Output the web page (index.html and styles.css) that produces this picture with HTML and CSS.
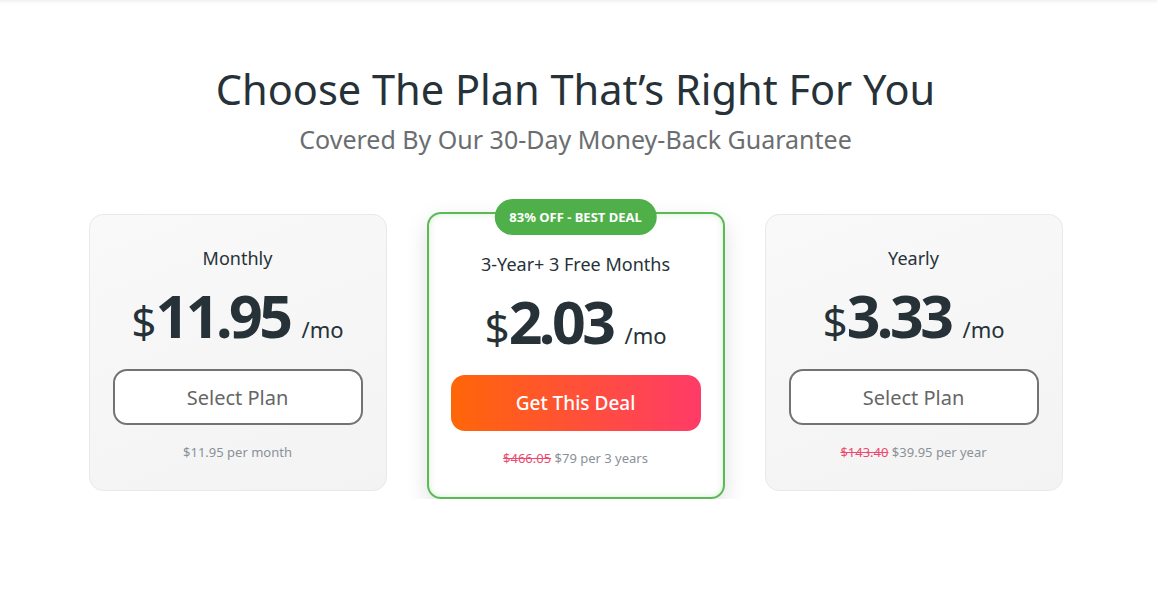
FILE: index.html
```html
<!DOCTYPE html>
<html>
<head>
<meta charset="utf-8">
<link rel="stylesheet" href="styles.css">
</head>
<body>
<div class="topbar"></div>
<section class="pricing">
  <h1 class="title">Choose The Plan That’s Right For You</h1>
  <p class="subtitle">Covered By Our 30-Day Money-Back Guarantee</p>
  <div class="plans">
    <div class="card">
      <div class="plan-name">Monthly</div>
      <div class="price"><span class="cur">$</span><span class="amount">11.95</span><span class="per">/mo</span></div>
      <button class="btn btn-outline">Select Plan</button>
      <div class="note">$11.95 per month</div>
    </div>
    <div class="card card-featured">
      <div class="badge">83% OFF - BEST DEAL</div>
      <div class="plan-name">3-Year+ 3 Free Months</div>
      <div class="price"><span class="cur">$</span><span class="amount">2.03</span><span class="per">/mo</span></div>
      <button class="btn btn-deal">Get This Deal</button>
      <div class="note"><s class="old">$466.05</s> $79 per 3 years</div>
    </div>
    <div class="card">
      <div class="plan-name">Yearly</div>
      <div class="price"><span class="cur">$</span><span class="amount">3.33</span><span class="per">/mo</span></div>
      <button class="btn btn-outline">Select Plan</button>
      <div class="note"><s class="old">$143.40</s> $39.95 per year</div>
    </div>
  </div>
</section>
</body>
</html>
```

FILE: styles.css
```css
* { box-sizing: border-box; }
body {
  margin: 0;
  background: #fff;
  font-family: "Noto Sans", "Open Sans", sans-serif;
  color: #263238;
}
.topbar {
  height: 4px;
  background: linear-gradient(#f1f1f1, #fff);
}
.pricing {
  display: flex;
  flex-direction: column;
  align-items: center;
  padding-right: 6px;
}
.title {
  margin: 57px 0 0;
  font-size: 41.5px;
  font-weight: 400;
  line-height: 56px;
  color: #263238;
}
.subtitle {
  margin: 5px 0 0;
  font-size: 25px;
  line-height: 34px;
  color: #6b6e70;
}
.plans {
  display: flex;
  gap: 40px;
  margin-top: 58px;
  align-items: flex-start;
}
.card {
  position: relative;
  width: 298px;
  height: 277px;
  border: 1px solid #e9e9e9;
  border-radius: 14px;
  background: linear-gradient(160deg, #f9f9f9, #f3f3f3);
  display: flex;
  flex-direction: column;
  align-items: center;
  padding-top: 31px;
}
.card-featured {
  margin-top: -2px;
  height: 287px;
  border: 2px solid #5cba55;
  background: #fff;
  box-shadow: 0 8px 22px rgba(0,0,0,0.13), inset 0 0 6px rgba(92,186,85,0.25);
  padding-top: 38px;
}
.badge {
  position: absolute;
  top: -15px;
  left: 50%;
  transform: translateX(-50%);
  background: #4fb04a;
  color: #fff;
  font-size: 13px;
  font-weight: 700;
  line-height: 36px;
  height: 36px;
  padding: 0 15px;
  border-radius: 18px;
  white-space: nowrap;
}
.plan-name {
  font-size: 18px;
  line-height: 24px;
  color: #263238;
}
.price {
  display: flex;
  align-items: baseline;
  margin-top: 10px;
  height: 70px;
  line-height: 70px;
}
.cur {
  font-size: 44px;
  margin-right: -1px;
}
.amount {
  font-size: 59px;
  font-weight: 700;
  letter-spacing: -3.5px;
}
.per {
  font-size: 22px;
  margin-left: 12px;
}
.btn {
  margin-top: 19px;
  width: 250px;
  height: 56px;
  border-radius: 14px;
  font-family: inherit;
  font-size: 20px;
  cursor: pointer;
}
.btn-outline {
  background: #fff;
  border: 2px solid #737373;
  color: #666;
}
.btn-deal {
  border: none;
  color: #fff;
  font-weight: 500;
  font-size: 19px;
  background: linear-gradient(90deg, #ff6608, #ff3b68);
}
.note {
  margin-top: 18px;
  font-size: 13px;
  color: #8a9199;
}
.old {
  color: #ec4a6f;
}
```
